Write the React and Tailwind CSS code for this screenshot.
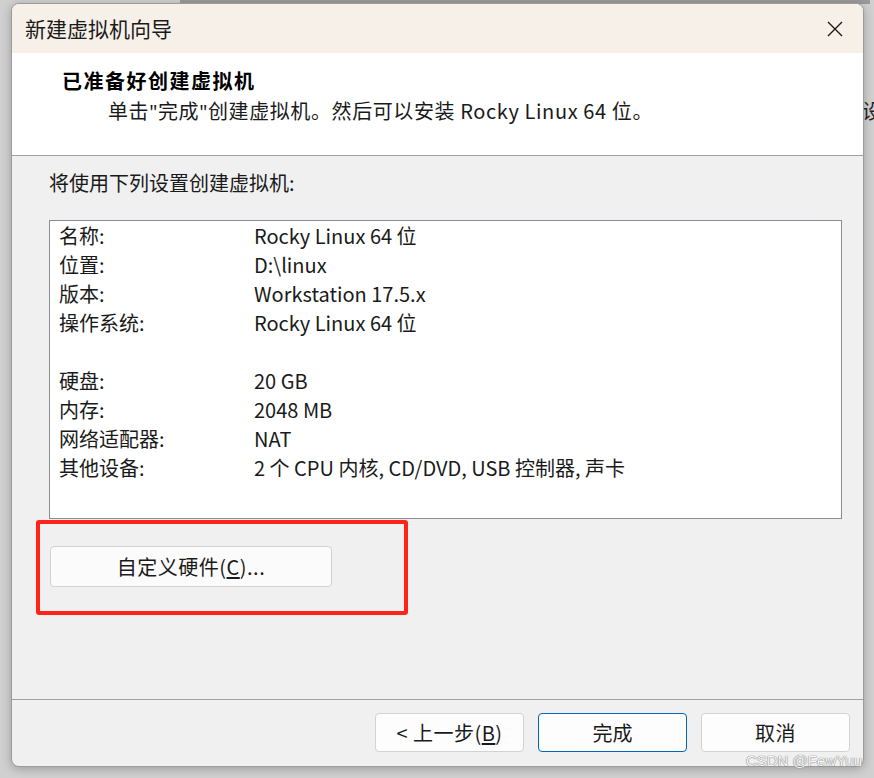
import React from "react";

const font = { fontFamily: '"Noto Sans CJK SC", "Noto Sans", sans-serif' };

const ajustes = [
  { etiqueta: "名称:", valor: "Rocky Linux 64 位" },
  { etiqueta: "位置:", valor: "D:\\linux" },
  { etiqueta: "版本:", valor: "Workstation 17.5.x" },
  { etiqueta: "操作系统:", valor: "Rocky Linux 64 位" },
  { etiqueta: "", valor: "" },
  { etiqueta: "硬盘:", valor: "20 GB" },
  { etiqueta: "内存:", valor: "2048 MB" },
  { etiqueta: "网络适配器:", valor: "NAT" },
  { etiqueta: "其他设备:", valor: "2 个 CPU 内核, CD/DVD, USB 控制器, 声卡" },
];

function Boton({ children, primario }) {
  return (
    <button
      className={
        primario
          ? "w-[149px] h-[39px] rounded-[4px] border border-[#0067c0] bg-[#fdfdfd] text-[20px] text-[#1a1a1a]"
          : "w-[149px] h-[39px] rounded-[4px] border border-[#d2d2d2] bg-[#fdfdfd] text-[20px] text-[#1a1a1a] tracking-[0.5px]"
      }
    >
      {children}
    </button>
  );
}

export default function App() {
  return (
    <div
      className="relative w-[874px] h-[778px] overflow-hidden bg-[#d0d0d0] pl-[11px] pt-[3px]"
      style={font}
    >
      {/* fondo detras del dialogo */}
      <div className="absolute left-[180px] top-0 w-[690px] h-[4px] bg-[#9a9a9a]" />
      <div className="absolute left-[862px] top-[96px] text-[20px] text-[#222]">设</div>

      {/* DIALOGO */}
      <div className="relative w-[853px] h-[764px] rounded-[8px] border border-[#9c9c9c] bg-[#f0f0f0] shadow-[0_2px_10px_rgba(0,0,0,0.25)] flex flex-col overflow-hidden">
        {/* barra de titulo */}
        <div className="h-[49px] bg-[#f7f0e9] flex items-center justify-between pl-[13px] pr-[20px]">
          <span className="text-[21px] text-[#1a1a1a]">新建虚拟机向导</span>
          <svg width="16" height="16" viewBox="0 0 16 16">
            <path d="M1 1 L15 15 M15 1 L1 15" stroke="#1a1a1a" strokeWidth="1.4" />
          </svg>
        </div>

        {/* cabecera */}
        <div className="h-[103px] bg-white border-b border-[#a0a0a0] pl-[50px] pt-[14px]">
          <div className="text-[20px] font-bold text-black leading-[28px] tracking-[1.5px]">
            已准备好创建虚拟机
          </div>
          <div className="pl-[46px] mt-[2px] text-[20px] text-[#1a1a1a] leading-[28px] tracking-[0.6px]">
            单击<span style={{ fontFamily: '"Noto Sans", sans-serif' }}>"</span>完成
            <span style={{ fontFamily: '"Noto Sans", sans-serif' }}>"</span>创建虚拟机。然后可以安装 Rocky Linux 64 位。
          </div>
        </div>

        {/* cuerpo */}
        <div className="relative flex-1 pl-[37px] pr-[21px] pt-[13px]">
          <div className="text-[20px] text-[#1a1a1a] leading-[28px]">将使用下列设置创建虚拟机:</div>

          <div className="mt-[23px] h-[299px] border border-[#8c8c96] bg-white pl-[9px]">
            {ajustes.map((a, i) => (
              <div key={i} className="flex h-[29px] items-center text-[20px] text-[#1a1a1a]">
                <span className="w-[195px]">{a.etiqueta}</span>
                <span>{a.valor}</span>
              </div>
            ))}
          </div>

          <button className="mt-[27px] ml-[1px] w-[282px] h-[41px] rounded-[4px] border border-[#d2d2d2] bg-[#fbfbfb] text-[20px] text-[#1a1a1a] tracking-[0.5px]">
            自定义硬件(<span className="underline underline-offset-2">C</span>)...
          </button>

          {/* marca roja */}
          <div className="absolute left-[24px] top-[364px] w-[372px] h-[95px] rounded-[3px] border-[4px] border-[#ff2419]" />
        </div>

        {/* pie */}
        <div className="h-[67px] border-t border-[#a0a0a0] flex justify-end items-start gap-[14px] pt-[13px] pr-[13px]">
          <Boton>
            &lt; 上一步(<span className="underline underline-offset-2">B</span>)
          </Boton>
          <Boton primario>完成</Boton>
          <Boton>取消</Boton>
        </div>
      </div>

      <div
        className="absolute right-[12px] bottom-[6px] text-[15px] text-[#f6f6f6] [text-shadow:0_0_1px_#777,0_0_1px_#777]"
        style={{ fontFamily: '"Liberation Sans", sans-serif' }}
      >
        CSDN @FewYuu
      </div>
    </div>
  );
}
